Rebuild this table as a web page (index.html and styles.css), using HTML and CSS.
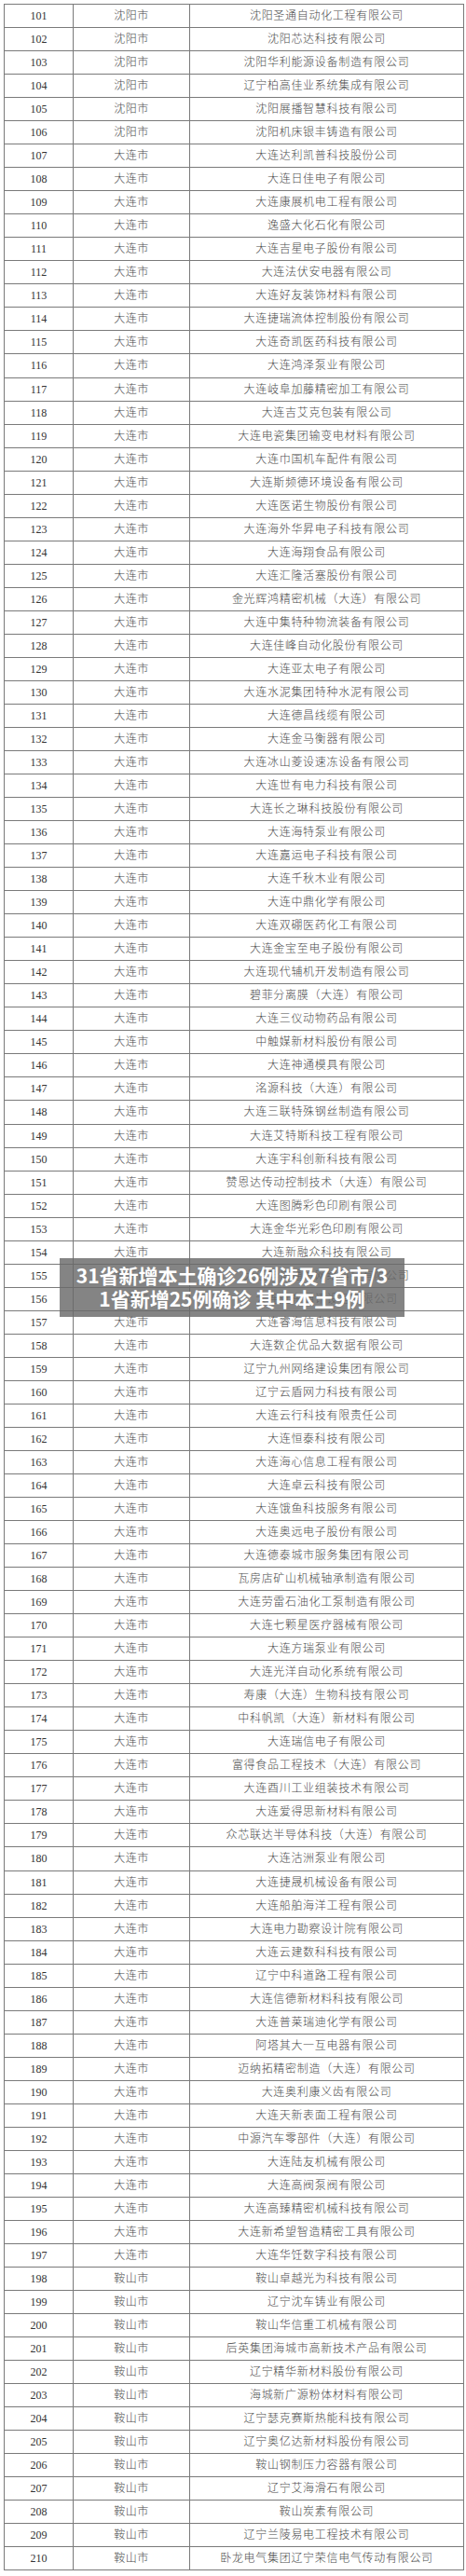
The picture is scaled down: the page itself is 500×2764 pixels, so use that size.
FILE: index.html
```html
<!DOCTYPE html>
<html lang="zh-CN">
<head>
<meta charset="utf-8">
<title>名单</title>
<link rel="stylesheet" href="styles.css">
</head>
<body>
<table class="list">
<colgroup><col class="c-no"><col class="c-city"><col class="c-name"></colgroup>
<tbody>
<tr><td class="no">101</td><td class="city">沈阳市</td><td class="name">沈阳圣通自动化工程有限公司</td></tr>
<tr><td class="no">102</td><td class="city">沈阳市</td><td class="name">沈阳芯达科技有限公司</td></tr>
<tr><td class="no">103</td><td class="city">沈阳市</td><td class="name">沈阳华利能源设备制造有限公司</td></tr>
<tr><td class="no">104</td><td class="city">沈阳市</td><td class="name">辽宁柏高佳业系统集成有限公司</td></tr>
<tr><td class="no">105</td><td class="city">沈阳市</td><td class="name">沈阳展播智慧科技有限公司</td></tr>
<tr><td class="no">106</td><td class="city">沈阳市</td><td class="name">沈阳机床银丰铸造有限公司</td></tr>
<tr><td class="no">107</td><td class="city">大连市</td><td class="name">大连达利凯普科技股份公司</td></tr>
<tr><td class="no">108</td><td class="city">大连市</td><td class="name">大连日佳电子有限公司</td></tr>
<tr><td class="no">109</td><td class="city">大连市</td><td class="name">大连康展机电工程有限公司</td></tr>
<tr><td class="no">110</td><td class="city">大连市</td><td class="name">逸盛大化石化有限公司</td></tr>
<tr><td class="no">111</td><td class="city">大连市</td><td class="name">大连吉星电子股份有限公司</td></tr>
<tr><td class="no">112</td><td class="city">大连市</td><td class="name">大连法伏安电器有限公司</td></tr>
<tr><td class="no">113</td><td class="city">大连市</td><td class="name">大连好友装饰材料有限公司</td></tr>
<tr><td class="no">114</td><td class="city">大连市</td><td class="name">大连捷瑞流体控制股份有限公司</td></tr>
<tr><td class="no">115</td><td class="city">大连市</td><td class="name">大连奇凯医药科技有限公司</td></tr>
<tr><td class="no">116</td><td class="city">大连市</td><td class="name">大连鸿泽泵业有限公司</td></tr>
<tr><td class="no">117</td><td class="city">大连市</td><td class="name">大连岐阜加藤精密加工有限公司</td></tr>
<tr><td class="no">118</td><td class="city">大连市</td><td class="name">大连吉艾克包装有限公司</td></tr>
<tr><td class="no">119</td><td class="city">大连市</td><td class="name">大连电瓷集团输变电材料有限公司</td></tr>
<tr><td class="no">120</td><td class="city">大连市</td><td class="name">大连巾国机车配件有限公司</td></tr>
<tr><td class="no">121</td><td class="city">大连市</td><td class="name">大连斯频德环境设备有限公司</td></tr>
<tr><td class="no">122</td><td class="city">大连市</td><td class="name">大连医诺生物股份有限公司</td></tr>
<tr><td class="no">123</td><td class="city">大连市</td><td class="name">大连海外华昇电子科技有限公司</td></tr>
<tr><td class="no">124</td><td class="city">大连市</td><td class="name">大连海翔食品有限公司</td></tr>
<tr><td class="no">125</td><td class="city">大连市</td><td class="name">大连汇隆活塞股份有限公司</td></tr>
<tr><td class="no">126</td><td class="city">大连市</td><td class="name">金光辉鸿精密机械（大连）有限公司</td></tr>
<tr><td class="no">127</td><td class="city">大连市</td><td class="name">大连中集特种物流装备有限公司</td></tr>
<tr><td class="no">128</td><td class="city">大连市</td><td class="name">大连佳峰自动化股份有限公司</td></tr>
<tr><td class="no">129</td><td class="city">大连市</td><td class="name">大连亚太电子有限公司</td></tr>
<tr><td class="no">130</td><td class="city">大连市</td><td class="name">大连水泥集团特种水泥有限公司</td></tr>
<tr><td class="no">131</td><td class="city">大连市</td><td class="name">大连德昌线缆有限公司</td></tr>
<tr><td class="no">132</td><td class="city">大连市</td><td class="name">大连金马衡器有限公司</td></tr>
<tr><td class="no">133</td><td class="city">大连市</td><td class="name">大连冰山菱设速冻设备有限公司</td></tr>
<tr><td class="no">134</td><td class="city">大连市</td><td class="name">大连世有电力科技有限公司</td></tr>
<tr><td class="no">135</td><td class="city">大连市</td><td class="name">大连长之琳科技股份有限公司</td></tr>
<tr><td class="no">136</td><td class="city">大连市</td><td class="name">大连海特泵业有限公司</td></tr>
<tr><td class="no">137</td><td class="city">大连市</td><td class="name">大连嘉运电子科技有限公司</td></tr>
<tr><td class="no">138</td><td class="city">大连市</td><td class="name">大连千秋木业有限公司</td></tr>
<tr><td class="no">139</td><td class="city">大连市</td><td class="name">大连中鼎化学有限公司</td></tr>
<tr><td class="no">140</td><td class="city">大连市</td><td class="name">大连双硼医药化工有限公司</td></tr>
<tr><td class="no">141</td><td class="city">大连市</td><td class="name">大连金宝至电子股份有限公司</td></tr>
<tr><td class="no">142</td><td class="city">大连市</td><td class="name">大连现代辅机开发制造有限公司</td></tr>
<tr><td class="no">143</td><td class="city">大连市</td><td class="name">碧菲分离膜（大连）有限公司</td></tr>
<tr><td class="no">144</td><td class="city">大连市</td><td class="name">大连三仪动物药品有限公司</td></tr>
<tr><td class="no">145</td><td class="city">大连市</td><td class="name">中触媒新材料股份有限公司</td></tr>
<tr><td class="no">146</td><td class="city">大连市</td><td class="name">大连神通模具有限公司</td></tr>
<tr><td class="no">147</td><td class="city">大连市</td><td class="name">洺源科技（大连）有限公司</td></tr>
<tr><td class="no">148</td><td class="city">大连市</td><td class="name">大连三联特殊钢丝制造有限公司</td></tr>
<tr><td class="no">149</td><td class="city">大连市</td><td class="name">大连艾特斯科技工程有限公司</td></tr>
<tr><td class="no">150</td><td class="city">大连市</td><td class="name">大连宇科创新科技有限公司</td></tr>
<tr><td class="no">151</td><td class="city">大连市</td><td class="name">赞恩达传动控制技术（大连）有限公司</td></tr>
<tr><td class="no">152</td><td class="city">大连市</td><td class="name">大连图腾彩色印刷有限公司</td></tr>
<tr><td class="no">153</td><td class="city">大连市</td><td class="name">大连金华光彩色印刷有限公司</td></tr>
<tr><td class="no">154</td><td class="city">大连市</td><td class="name">大连新融众科技有限公司</td></tr>
<tr><td class="no">155</td><td class="city">大连市</td><td class="name">大连华信通达网络科技有限公司</td></tr>
<tr><td class="no">156</td><td class="city">大连市</td><td class="name">大连远东通讯设备有限公司</td></tr>
<tr><td class="no">157</td><td class="city">大连市</td><td class="name">大连睿海信息科技有限公司</td></tr>
<tr><td class="no">158</td><td class="city">大连市</td><td class="name">大连数企优品大数据有限公司</td></tr>
<tr><td class="no">159</td><td class="city">大连市</td><td class="name">辽宁九州网络建设集团有限公司</td></tr>
<tr><td class="no">160</td><td class="city">大连市</td><td class="name">辽宁云盾网力科技有限公司</td></tr>
<tr><td class="no">161</td><td class="city">大连市</td><td class="name">大连云行科技有限责任公司</td></tr>
<tr><td class="no">162</td><td class="city">大连市</td><td class="name">大连恒泰科技有限公司</td></tr>
<tr><td class="no">163</td><td class="city">大连市</td><td class="name">大连海心信息工程有限公司</td></tr>
<tr><td class="no">164</td><td class="city">大连市</td><td class="name">大连卓云科技有限公司</td></tr>
<tr><td class="no">165</td><td class="city">大连市</td><td class="name">大连饿鱼科技服务有限公司</td></tr>
<tr><td class="no">166</td><td class="city">大连市</td><td class="name">大连奥远电子股份有限公司</td></tr>
<tr><td class="no">167</td><td class="city">大连市</td><td class="name">大连德泰城市服务集团有限公司</td></tr>
<tr><td class="no">168</td><td class="city">大连市</td><td class="name">瓦房店矿山机械轴承制造有限公司</td></tr>
<tr><td class="no">169</td><td class="city">大连市</td><td class="name">大连劳雷石油化工泵制造有限公司</td></tr>
<tr><td class="no">170</td><td class="city">大连市</td><td class="name">大连七颗星医疗器械有限公司</td></tr>
<tr><td class="no">171</td><td class="city">大连市</td><td class="name">大连方瑞泵业有限公司</td></tr>
<tr><td class="no">172</td><td class="city">大连市</td><td class="name">大连光洋自动化系统有限公司</td></tr>
<tr><td class="no">173</td><td class="city">大连市</td><td class="name">寿康（大连）生物科技有限公司</td></tr>
<tr><td class="no">174</td><td class="city">大连市</td><td class="name">中科帆凯（大连）新材料有限公司</td></tr>
<tr><td class="no">175</td><td class="city">大连市</td><td class="name">大连瑞信电子有限公司</td></tr>
<tr><td class="no">176</td><td class="city">大连市</td><td class="name">富得食品工程技术（大连）有限公司</td></tr>
<tr><td class="no">177</td><td class="city">大连市</td><td class="name">大连酉川工业组装技术有限公司</td></tr>
<tr><td class="no">178</td><td class="city">大连市</td><td class="name">大连爱得思新材料有限公司</td></tr>
<tr><td class="no">179</td><td class="city">大连市</td><td class="name">众芯联达半导体科技（大连）有限公司</td></tr>
<tr><td class="no">180</td><td class="city">大连市</td><td class="name">大连沽洲泵业有限公司</td></tr>
<tr><td class="no">181</td><td class="city">大连市</td><td class="name">大连捷晟机械设备有限公司</td></tr>
<tr><td class="no">182</td><td class="city">大连市</td><td class="name">大连船舶海洋工程有限公司</td></tr>
<tr><td class="no">183</td><td class="city">大连市</td><td class="name">大连电力勘察设计院有限公司</td></tr>
<tr><td class="no">184</td><td class="city">大连市</td><td class="name">大连云建数科科技有限公司</td></tr>
<tr><td class="no">185</td><td class="city">大连市</td><td class="name">辽宁中科道路工程有限公司</td></tr>
<tr><td class="no">186</td><td class="city">大连市</td><td class="name">大连信德新材料科技有限公司</td></tr>
<tr><td class="no">187</td><td class="city">大连市</td><td class="name">大连普莱瑞迪化学有限公司</td></tr>
<tr><td class="no">188</td><td class="city">大连市</td><td class="name">阿塔其大一互电器有限公司</td></tr>
<tr><td class="no">189</td><td class="city">大连市</td><td class="name">迈纳拓精密制造（大连）有限公司</td></tr>
<tr><td class="no">190</td><td class="city">大连市</td><td class="name">大连奥利康义齿有限公司</td></tr>
<tr><td class="no">191</td><td class="city">大连市</td><td class="name">大连天新表面工程有限公司</td></tr>
<tr><td class="no">192</td><td class="city">大连市</td><td class="name">中源汽车零部件（大连）有限公司</td></tr>
<tr><td class="no">193</td><td class="city">大连市</td><td class="name">大连陆友机械有限公司</td></tr>
<tr><td class="no">194</td><td class="city">大连市</td><td class="name">大连高阀泵阀有限公司</td></tr>
<tr><td class="no">195</td><td class="city">大连市</td><td class="name">大连高臻精密机械科技有限公司</td></tr>
<tr><td class="no">196</td><td class="city">大连市</td><td class="name">大连新希望智造精密工具有限公司</td></tr>
<tr><td class="no">197</td><td class="city">大连市</td><td class="name">大连华饪数字科技有限公司</td></tr>
<tr><td class="no">198</td><td class="city">鞍山市</td><td class="name">鞍山卓越光为科技有限公司</td></tr>
<tr><td class="no">199</td><td class="city">鞍山市</td><td class="name">辽宁沈车铸业有限公司</td></tr>
<tr><td class="no">200</td><td class="city">鞍山市</td><td class="name">鞍山华信重工机械有限公司</td></tr>
<tr><td class="no">201</td><td class="city">鞍山市</td><td class="name">后英集团海城市高新技术产品有限公司</td></tr>
<tr><td class="no">202</td><td class="city">鞍山市</td><td class="name">辽宁精华新材料股份有限公司</td></tr>
<tr><td class="no">203</td><td class="city">鞍山市</td><td class="name">海城新广源粉体材料有限公司</td></tr>
<tr><td class="no">204</td><td class="city">鞍山市</td><td class="name">辽宁瑟克赛斯热能科技有限公司</td></tr>
<tr><td class="no">205</td><td class="city">鞍山市</td><td class="name">辽宁奥亿达新材料股份有限公司</td></tr>
<tr><td class="no">206</td><td class="city">鞍山市</td><td class="name">鞍山钢制压力容器有限公司</td></tr>
<tr><td class="no">207</td><td class="city">鞍山市</td><td class="name">辽宁艾海滑石有限公司</td></tr>
<tr><td class="no">208</td><td class="city">鞍山市</td><td class="name">鞍山炭素有限公司</td></tr>
<tr><td class="no">209</td><td class="city">鞍山市</td><td class="name">辽宁兰陵易电工程技术有限公司</td></tr>
<tr><td class="no">210</td><td class="city">鞍山市</td><td class="name">卧龙电气集团辽宁荣信电气传动有限公司</td></tr>
</tbody>
</table>
<div class="banner">31省新增本土确诊26例涉及7省市/31省新增25例确诊 其中本土9例</div>
</body>
</html>
```

FILE: styles.css
```css
html, body {
  margin: 0;
  padding: 0;
  background: #ffffff;
}
body {
  position: relative;
  width: 500px;
  min-height: 2764px;
  font-family: "Liberation Serif", "Noto Sans CJK SC", serif;
}
.list {
  margin: 4px 0 0 4px;
  width: 493px;
  table-layout: fixed;
  border-collapse: collapse;
  color: #4a4a4a;
  font-size: 12px;
}
.c-no { width: 74px; }
.c-city { width: 125px; }
.c-name { width: 294px; }
.list tr {
  height: 25.045px;
}
.list td {
  border: 1px solid #7a7a7a;
  padding: 0;
  text-align: center;
  vertical-align: middle;
  line-height: 14px;
  white-space: nowrap;
}
.list .no {
  font-family: "Liberation Serif", serif;
  font-size: 12px;
  color: #333333;
}
.list .city {
  letter-spacing: 0.5px;
  font-weight: 300;
}
.list .name {
  letter-spacing: 0.7px;
  font-weight: 300;
}
.banner {
  position: absolute;
  top: 1350px;
  left: 64px;
  width: 346px;
  height: 51px;
  padding: 6px 12px;
  background: rgba(105, 105, 105, 0.82);
  color: #ffffff;
  font-family: "Noto Sans CJK SC", "Noto Sans", sans-serif;
  font-weight: 700;
  font-size: 21px;
  line-height: 25px;
  text-align: center;
  word-break: break-all;
}
```
